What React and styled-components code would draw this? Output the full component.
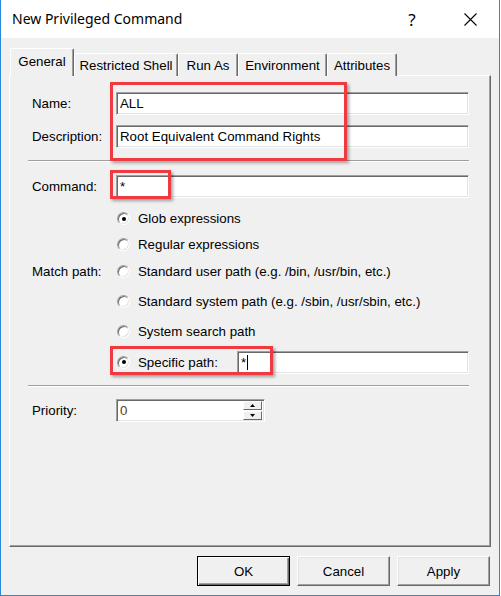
import React from "react";
import styled, { createGlobalStyle } from "styled-components";

const GlobalStyle = createGlobalStyle`
  html, body { margin: 0; padding: 0; background: #ffffff; }
  body { font-family: "Liberation Sans", Arial, sans-serif; color: #000; }
  * { box-sizing: border-box; }
`;

const Window = styled.div`
  position: relative;
  width: 500px;
  height: 596px;
  display: flex;
  flex-direction: column;
  background: #f0f0f0;
  border-left: 1px solid #2b87d9;
  border-right: 1px solid #2b87d9;
  border-bottom: 1px solid #2b87d9;
  overflow: hidden;
`;

const TitleBar = styled.div`
  height: 38px;
  flex: 0 0 38px;
  background: #ffffff;
  display: flex;
  align-items: center;
  padding-left: 11px;
`;

const Title = styled.div`
  flex: 1;
  font-family: "Noto Sans", "Open Sans", sans-serif;
  font-size: 14px;
  color: #000;
  padding-bottom: 1px;
`;

const CaptionButton = styled.div`
  width: 58px;
  height: 38px;
  display: flex;
  align-items: center;
  justify-content: center;
  font-family: "Noto Sans", sans-serif;
  font-size: 17px;
  color: #000;
`;

const Body = styled.div`
  flex: 1;
  display: flex;
  flex-direction: column;
  padding: 10px 8px 0 8px;
`;

const TabStrip = styled.div`
  display: flex;
  align-items: flex-end;
  height: 28px;
  padding-left: 1px;
  margin-bottom: -1px;
  position: relative;
  z-index: 1;
`;

const Tab = styled.div`
  width: ${(p) => p.$w}px;
  height: ${(p) => (p.$active ? 28 : 23)}px;
  display: flex;
  align-items: center;
  justify-content: center;
  padding-bottom: ${(p) => (p.$active ? 3 : 0)}px;
  background: #f0f0f0;
  border-top: 1px solid #ffffff;
  border-left: 1px solid #ffffff;
  border-right: 1px solid #696969;
  box-shadow: inset -1px 0 0 #a0a0a0;
  border-radius: 2px 2px 0 0;
  font-size: 13.3px;
  white-space: nowrap;
`;

const Panel = styled.div`
  flex: 1;
  display: flex;
  flex-direction: column;
  border-top: 1px solid #ffffff;
  border-left: 1px solid #ffffff;
  border-right: 1px solid #696969;
  border-bottom: 1px solid #696969;
  box-shadow: inset -1px -1px 0 #a0a0a0;
  padding: 16px 21px 0 22px;
`;

const FieldGrid = styled.div`
  display: grid;
  grid-template-columns: 84px 1fr;
  row-gap: 10px;
  align-items: center;
`;

const Label = styled.div`
  font-size: 13.3px;
  white-space: nowrap;
`;

const Field = styled.div`
  height: 23px;
  width: ${(p) => (p.$w ? `${p.$w}px` : "auto")};
  flex: ${(p) => (p.$grow ? 1 : "none")};
  background: #ffffff;
  border-top: 1px solid #a0a0a0;
  border-left: 1px solid #a0a0a0;
  border-right: 1px solid #ffffff;
  border-bottom: 1px solid #ffffff;
  box-shadow: inset 1px 1px 0 #696969, inset -1px -1px 0 #e3e3e3;
  display: flex;
  align-items: center;
  padding-left: 3px;
  font-size: 13.3px;
  white-space: nowrap;
  overflow: hidden;
`;

const Caret = styled.span`
  display: inline-block;
  width: 1px;
  height: 15px;
  background: #000;
  margin-left: 1px;
`;

const Separator = styled.div`
  height: 2px;
  border-top: 1px solid #a0a0a0;
  border-bottom: 1px solid #ffffff;
  margin: ${(p) => p.$m};
  margin-left: -4px;
`;

const MatchGrid = styled.div`
  display: grid;
  grid-template-columns: 84px 1fr;
  grid-template-rows: 25px 26px 29px 30px 31px 30px;
  align-items: center;
  margin-top: 8px;
`;

const MatchLabel = styled(Label)`
  grid-column: 1;
  grid-row: 3;
`;

const RadioRow = styled.div`
  grid-column: 2;
  grid-row: ${(p) => p.$row};
  display: flex;
  align-items: center;
  padding-left: 1px;
  font-size: 13.3px;
  white-space: nowrap;
`;

const RadioCircle = styled.span`
  width: 13px;
  height: 13px;
  flex: none;
  border-radius: 50%;
  background: #ffffff;
  border: 1px solid;
  border-color: #a0a0a0 #ffffff #ffffff #a0a0a0;
  box-shadow: inset 1px 1px 0 #696969, inset -1px -1px 0 #e3e3e3;
  display: flex;
  align-items: center;
  justify-content: center;
  margin-right: 8px;
  &::after {
    content: "";
    width: 4px;
    height: 4px;
    border-radius: 50%;
    background: ${(p) => (p.$checked ? "#000" : "transparent")};
  }
`;

const SpecificLabel = styled.span`
  width: 99px;
  flex: none;
`;

const SpinBox = styled(Field)`
  padding-right: 2px;
  justify-content: space-between;
  color: #5a3c14;
`;

const SpinButtons = styled.div`
  width: 19px;
  height: 19px;
  display: flex;
  flex-direction: column;
  gap: 1px;
`;

const SpinButton = styled.div`
  flex: 1;
  background: #f0f0f0;
  border-top: 1px solid #ffffff;
  border-left: 1px solid #ffffff;
  border-right: 1px solid #696969;
  border-bottom: 1px solid #696969;
  display: flex;
  align-items: center;
  justify-content: center;
`;

const ButtonRow = styled.div`
  display: flex;
  justify-content: flex-end;
  gap: 7px;
  padding: 9px 1px 9px 0;
`;

const DialogButton = styled.div`
  width: 93px;
  height: 30px;
  display: flex;
  align-items: center;
  justify-content: center;
  background: #f0f0f0;
  font-size: 13.3px;
  border: 1px solid ${(p) => (p.$default ? "#000" : "transparent")};
  box-shadow: ${(p) =>
    p.$default
      ? "inset 1px 1px 0 #ffffff, inset -1px -1px 0 #696969, inset -2px -2px 0 #a0a0a0"
      : "inset 1px 1px 0 #ffffff, inset -1px -1px 0 #696969, inset -2px -2px 0 #a0a0a0"};
  ${(p) =>
    !p.$default &&
    `border-top-color: #ffffff; border-left-color: #ffffff; border-right-color: #696969; border-bottom-color: #696969; box-shadow: inset -1px -1px 0 #a0a0a0, inset 1px 1px 0 #e3e3e3;`}
`;

const Highlight = styled.div`
  position: absolute;
  left: ${(p) => p.$x}px;
  top: ${(p) => p.$y}px;
  width: ${(p) => p.$w}px;
  height: ${(p) => p.$h}px;
  border: 3px solid #f03a3f;
  box-shadow: 2px 2px 3px rgba(0, 0, 0, 0.35);
  pointer-events: none;
`;

const tabs = [
  { label: "General", w: 64, active: true },
  { label: "Restricted Shell", w: 104 },
  { label: "Run As", w: 60 },
  { label: "Environment", w: 89 },
  { label: "Attributes", w: 70 },
];

const radios = [
  { label: "Glob expressions", checked: true },
  { label: "Regular expressions" },
  { label: "Standard user path (e.g. /bin, /usr/bin, etc.)" },
  { label: "Standard system path (e.g. /sbin, /usr/sbin, etc.)" },
  { label: "System search path" },
];

function Tri({ up }) {
  return (
    <svg width="5" height="3" viewBox="0 0 5 3">
      <polygon points={up ? "0,3 5,3 2.5,0" : "0,0 5,0 2.5,3"} fill="#000" />
    </svg>
  );
}

export default function App() {
  return (
    <>
      <GlobalStyle />
      <Window>
        <TitleBar>
          <Title>New Privileged Command</Title>
          <CaptionButton>?</CaptionButton>
          <CaptionButton>
            <svg width="13" height="13" viewBox="0 0 13 13">
              <path d="M0.5 0.5 L12.5 12.5 M12.5 0.5 L0.5 12.5" stroke="#000" strokeWidth="1.1" />
            </svg>
          </CaptionButton>
        </TitleBar>
        <Body>
          <TabStrip>
            {tabs.map((t) => (
              <Tab key={t.label} $w={t.w} $active={t.active}>
                {t.label}
              </Tab>
            ))}
          </TabStrip>
          <Panel>
            <FieldGrid>
              <Label>Name:</Label>
              <Field>ALL</Field>
              <Label>Description:</Label>
              <Field>Root Equivalent Command Rights</Field>
            </FieldGrid>
            <Separator $m="12px 0 13px" />
            <FieldGrid>
              <Label>Command:</Label>
              <Field>*</Field>
            </FieldGrid>
            <MatchGrid>
              <MatchLabel>Match path:</MatchLabel>
              {radios.map((r, i) => (
                <RadioRow key={r.label} $row={i + 1}>
                  <RadioCircle $checked={r.checked} />
                  {r.label}
                </RadioRow>
              ))}
              <RadioRow $row={6}>
                <RadioCircle $checked />
                <SpecificLabel>Specific path:</SpecificLabel>
                <Field $grow>
                  *<Caret />
                </Field>
              </RadioRow>
            </MatchGrid>
            <Separator $m="8px 0 12px" />
            <FieldGrid>
              <Label>Priority:</Label>
              <SpinBox $w={149}>
                0
                <SpinButtons>
                  <SpinButton>
                    <Tri up />
                  </SpinButton>
                  <SpinButton>
                    <Tri />
                  </SpinButton>
                </SpinButtons>
              </SpinBox>
            </FieldGrid>
          </Panel>
          <ButtonRow>
            <DialogButton $default>OK</DialogButton>
            <DialogButton>Cancel</DialogButton>
            <DialogButton>Apply</DialogButton>
          </ButtonRow>
        </Body>
        <Highlight $x={109} $y={82} $w={237} $h={79} />
        <Highlight $x={109} $y={170} $w={61} $h={29} />
        <Highlight $x={109} $y={346} $w={163} $h={29} />
      </Window>
    </>
  );
}
